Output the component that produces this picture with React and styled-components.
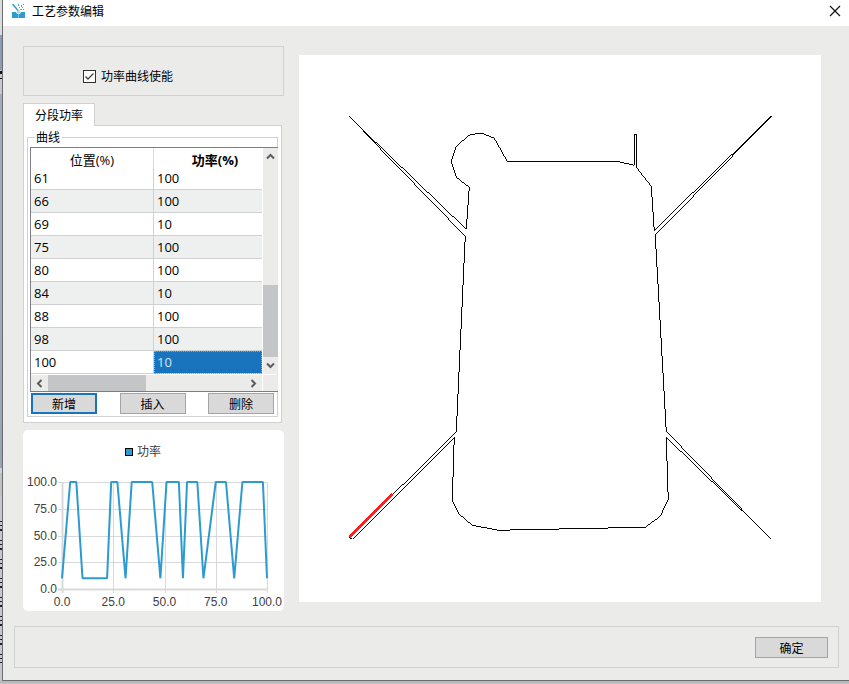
import React, { useState } from "react";
import styled, { createGlobalStyle } from "styled-components";

const Color = {
    Face: "#ebebe9",
    Line: "#d0d1d3",
    Frame: "#7b7d8a",
    Thumb: "#c4c5c7",
    Button: "#d9d9d9",
    ButtonLine: "#a3a4a8",
    Primary: "#1a74bd",
    Series: "#2d9bd0",
};

const POINTS = [
    [0, 10], [4, 100], [7, 100], [10, 10], [22, 10], [24, 100], [27, 100], [31, 10],
    [34, 100], [44, 100], [48, 10], [51, 100], [57, 100], [59, 10], [61, 100], [66, 100],
    [69, 10], [75, 100], [80, 100], [84, 10], [88, 100], [98, 100], [100, 10],
];
const VISIBLE_ROWS = 9;

const GlobalStyle = createGlobalStyle`
    * {
        box-sizing: border-box;
    }
    body {
        margin: 0;
        font-family: "Noto Sans CJK SC", sans-serif;
        font-size: 12px;
        line-height: 14px;
        color: #000;
    }
    button, input {
        font: inherit;
        color: inherit;
        margin: 0;
        padding: 0;
    }
`;

/* the sliver of the application behind the dialog */
const Desktop = styled.div`
    min-height: 100vh;
    padding: 0 0 3px 2px;
    background:
        repeating-linear-gradient(#222 0 1px, #c6c7c9 1px 4px, #222 4px 5px, #c6c7c9 5px 8px, #222 8px 10px, #c6c7c9 10px 19px) 0 521px / 2px 142px no-repeat,
        linear-gradient(#dcdcdc 0 35px, #8b9db5 35px 70px, #c8c8c8 70px 71px, #111 71px 74px, #c8c8c8 74px 78px, #111 78px 79px, #c8c8c8 79px 94px, #a2abbb 94px 300px, #97a3b5 468px, #d2d2d2 468px 473px, #c0c0c0 473px 496px, #c6c7c9 496px) 0 0 / 2px 681px no-repeat,
        linear-gradient(#b4b5b7, #bfc1c3) 0 100% / 100% 3px no-repeat,
        #c6c7c9;
`;

const Window = styled.div`
    border-left: 1px solid #6b6d73;
    border-bottom: 1px solid #6b6d73;
    background-color: ${Color.Face};
    padding-bottom: 12px;
`;

const TitleBar = styled.header`
    height: 26px;
    padding: 0 8px 4px;
    display: flex;
    align-items: center;
    background-color: #fff;
`;

const Title = styled.h1`
    margin: 0 0 0 7px;
    flex: 1;
    font-size: 12px;
    font-weight: 400;
`;

const CloseButton = styled.button`
    width: 12px;
    height: 12px;
    border: none;
    background: none;
    display: flex;
`;

const Content = styled.main`
    display: flex;
    align-items: flex-start;
    gap: 15px;
    padding: 20px 28px 15px 20px;
`;

const SidePanel = styled.div`
    width: 261px;
    flex: none;
    display: flex;
    flex-direction: column;
    gap: 7px;
`;

const EnableBox = styled.div`
    border: 1px solid ${Color.Line};
    padding: 22px 0 12px 59px;
`;

const CheckLabel = styled.label`
    display: flex;
    align-items: center;
    gap: 5px;
`;

const CheckWrap = styled.span`
    position: relative;
    width: 13px;
    height: 13px;
    svg {
        position: absolute;
        inset: 0;
        pointer-events: none;
    }
`;

const CheckInput = styled.input`
    appearance: none;
    display: block;
    width: 13px;
    height: 13px;
    border: 1px solid #333;
    background-color: #fff;
`;

const Tabs = styled.div`
    width: 259px;
`;

const Tab = styled.button`
    position: relative;
    display: block;
    width: 72px;
    height: 23px;
    margin-bottom: -1px;
    border: 1px solid ${Color.Line};
    border-bottom: none;
    background-color: #fff;
`;

const TabPanel = styled.div`
    border: 1px solid ${Color.Line};
    background-color: #fff;
    padding: 4px 3px 5px;
`;

const Group = styled.fieldset`
    min-width: 0;
    margin: 0;
    border: 1px solid ${Color.Line};
    padding: 3px 0 2px 2px;
`;

const Legend = styled.legend`
    margin-left: 5px;
    padding: 0 2px 0 1px;
`;

const TableFrame = styled.div`
    display: grid;
    grid-template-columns: 1fr 15px;
    grid-template-rows: auto 16px;
    gap: 1px;
    margin-right: -1px;
    border: 1px solid ${Color.Frame};
    border-right: none;
`;

const Table = styled.table`
    width: 100%;
    table-layout: fixed;
    border-collapse: separate;
    border-spacing: 0;
    font-family: "Open Sans", "Noto Sans CJK SC", sans-serif;
    font-size: 13px;
`;

const HeadCell = styled.th`
    height: 19px;
    padding: 5px 0 0;
    line-height: 14px;
    font-weight: ${(props) => (props.$current ? 700 : 400)};
    width: ${(props) => props.$width || "auto"};
    border-right: ${(props) => (props.$current ? "none" : "1px solid #dcdcdc")};
    padding-left: ${(props) => (props.$current ? "14px" : "0")};
`;

const Row = styled.tr`
    background-color: ${(props) => (props.$alt ? "#eef0ef" : "#fff")};
`;

const Cell = styled.td`
    height: 23px;
    padding: 0 3px;
    line-height: 18px;
    border-bottom: 1px solid ${Color.Line};
    border-right: ${(props) => (props.$last ? "none" : `1px solid ${Color.Line}`)};
    ${(props) =>
        props.$selected &&
        `
        background-color: ${Color.Primary};
        color: #cfe6f8;
        outline: 1px dotted #f08c3c;
        outline-offset: -1px;
    `}
`;

const ScrollBar = styled.div`
    display: flex;
    flex-direction: ${(props) => (props.$vertical ? "column" : "row")};
    background-color: ${Color.Face};
`;

const ScrollTrack = styled.div`
    flex: 1;
    display: flex;
    flex-direction: inherit;
    justify-content: ${(props) => (props.$end ? "flex-end" : "flex-start")};
`;

const ScrollThumb = styled.div`
    flex: 0 0 ${(props) => props.$length}px;
    background-color: ${Color.Thumb};
`;

const ArrowButton = styled.button`
    flex: 0 0 17px;
    display: flex;
    align-items: center;
    justify-content: center;
    border: none;
    background: none;
    svg {
        transform: rotate(${(props) => props.$turn}deg);
    }
`;

const Corner = styled.div`
    background-color: ${Color.Face};
`;

const ButtonRow = styled.div`
    display: flex;
    justify-content: space-between;
    padding: 1px 3px 0 1px;
`;

const Button = styled.button`
    width: ${(props) => (props.$wide ? 73 : 66)}px;
    height: 21px;
    border: ${(props) => (props.$focused ? `2px solid ${Color.Primary}` : `1px solid ${Color.ButtonLine}`)};
    background-color: ${Color.Button};
`;

const ChartCard = styled.div`
    height: 181px;
    border-radius: 5px;
    background-color: #fff;
    svg {
        display: block;
    }
    text {
        font-family: "Liberation Sans", "Noto Sans CJK SC", sans-serif;
        font-size: 12px;
        fill: #404044;
    }
`;

const Preview = styled.div`
    flex: 1;
    min-width: 0;
    margin-top: 9px;
    background-color: #fff;
    svg {
        display: block;
        width: 100%;
    }
`;

const Footer = styled.footer`
    display: flex;
    justify-content: flex-end;
    margin: 0 10px 0 11px;
    padding: 10px;
    border: 1px solid ${Color.Line};
    height: 42px;
`;

const AppIcon = () => (
    <svg width="14" height="16" viewBox="0 0 14 16">
        <path d="M1 9h4l1 2h3l1-2h4v6H1z" fill="#2d9bd0" />
        <path d="M6 8l1.5-1L9 8v2l-1.5 1L6 10z" fill="#a9d5e8" />
        <path d="M7 11h1v4H7z" fill="#7cc3e2" />
        <path d="M1.5 1L7 7.5" stroke="#2d9bd0" strokeWidth="1.4" fill="none" />
        <path d="M7 1h1v2H7zM8 4h1v1H8zM10 2h1v2h-1zM12 1h1v1h-1zM11 4h1v1h-1zM9 6h2v1H9zM12 6h1v1h-1z" fill="#4aa9cf" />
    </svg>
);

const Chevron = () => (
    <svg width="9" height="7" viewBox="0 0 9 7">
        <path d="M1 5.5L4.5 2L8 5.5" fill="none" stroke="#5c5c5e" strokeWidth="2" />
    </svg>
);

const PowerChart = ({ points }) => {
    const left = 39;
    const top = 52;
    const width = 205;
    const height = 107;
    const toX = (v) => left + (v * width) / 100;
    const toY = (v) => top + height - (v * height) / 100;
    const ticks = [0, 25, 50, 75, 100];

    return (
        <svg width="261" height="181" viewBox="0 0 261 181">
            <rect x="102.5" y="18.5" width="7" height="7" fill={Color.Series} stroke="#000" />
            <text x="114" y="26">功率</text>
            {ticks.map((t) => (
                <g key={t} stroke="#d9d9db">
                    <path d={`M${left - 4} ${Math.round(toY(t)) + 0.5}H${left + width}`} strokeWidth={t === 0 ? 2 : 1} />
                    <path d={`M${Math.round(toX(t)) + 0.5} ${top}V${top + height + 4}`} strokeWidth={t === 0 ? 2 : 1} />
                </g>
            ))}
            {ticks.map((t) => (
                <g key={t}>
                    <text x={left - 5} y={Math.round(toY(t)) + 4} textAnchor="end">{t.toFixed(1)}</text>
                    <text x={toX(t)} y="176" textAnchor="middle">{t.toFixed(1)}</text>
                </g>
            ))}
            <polyline
                points={points.map(([x, y]) => `${toX(x)},${toY(y)}`).join(" ")}
                fill="none"
                stroke={Color.Series}
                strokeWidth="2"
                strokeLinejoin="bevel"
            />
        </svg>
    );
};

const Contour = () => (
    <svg viewBox="-0.25 -0.25 522 547" fill="none" shapeRendering="crispEdges">
        {/* just under 1 so the diagonals stay one pixel thick */}
        <path
            stroke="#000"
            strokeWidth="0.98"
            d="M50 61L64 75L167 174L170 132L157 122L152 106L157 91L170 80L179 78L183 78L195 83L208 106L317 106L335 110
               V79H337V112L352 131L355 175L472 61L356 180L367 376L458 470L472 484L458 470L367 382L369 444L361 461L346 472
               L199 475L173 470L160 459L153 445L155 382L53 484L50 482L157 377L166 181L64 76"
        />
        <path stroke="#ff2020" strokeWidth="2.6" d="M50 482L93 439" />
    </svg>
);

export default function App() {
    const [enabled, setEnabled] = useState(true);
    const rows = POINTS.slice(-VISIBLE_ROWS);

    return (
        <Desktop>
            <GlobalStyle />
            <Window>
                <TitleBar>
                    <AppIcon />
                    <Title>工艺参数编辑</Title>
                    <CloseButton aria-label="关闭">
                        <svg width="12" height="12" viewBox="0 0 12 12">
                            <path d="M1 1L11 11M11 1L1 11" stroke="#111" strokeWidth="1.2" />
                        </svg>
                    </CloseButton>
                </TitleBar>
                <Content>
                    <SidePanel>
                        <EnableBox>
                            <CheckLabel>
                                <CheckWrap>
                                    <CheckInput type="checkbox" checked={enabled} onChange={(e) => setEnabled(e.target.checked)} />
                                    {enabled && (
                                        <svg width="13" height="13" viewBox="0 0 13 13">
                                            <path d="M2.5 6.5L5 9L10.5 3.5" fill="none" stroke="#444" strokeWidth="1.4" />
                                        </svg>
                                    )}
                                </CheckWrap>
                                功率曲线使能
                            </CheckLabel>
                        </EnableBox>
                        <Tabs>
                            <Tab role="tab" aria-selected="true">分段功率</Tab>
                            <TabPanel role="tabpanel">
                                <Group>
                                    <Legend>曲线</Legend>
                                    <TableFrame>
                                        <Table>
                                            <thead>
                                                <tr>
                                                    <HeadCell $width="123px">位置(%)</HeadCell>
                                                    <HeadCell $current>功率(%)</HeadCell>
                                                </tr>
                                            </thead>
                                            <tbody>
                                                {rows.map(([position, power], i) => (
                                                    <Row key={position} $alt={i % 2 === 1}>
                                                        <Cell>{position}</Cell>
                                                        <Cell $last $selected={i === rows.length - 1}>{power}</Cell>
                                                    </Row>
                                                ))}
                                            </tbody>
                                        </Table>
                                        <ScrollBar $vertical>
                                            <ArrowButton $turn={0} aria-label="向上"><Chevron /></ArrowButton>
                                            <ScrollTrack $end><ScrollThumb $length={72} /></ScrollTrack>
                                            <ArrowButton $turn={180} aria-label="向下"><Chevron /></ArrowButton>
                                        </ScrollBar>
                                        <ScrollBar>
                                            <ArrowButton $turn={-90} aria-label="向左"><Chevron /></ArrowButton>
                                            <ScrollTrack><ScrollThumb $length={98} /></ScrollTrack>
                                            <ArrowButton $turn={90} aria-label="向右"><Chevron /></ArrowButton>
                                        </ScrollBar>
                                        <Corner />
                                    </TableFrame>
                                    <ButtonRow>
                                        <Button $focused>新增</Button>
                                        <Button>插入</Button>
                                        <Button>删除</Button>
                                    </ButtonRow>
                                </Group>
                            </TabPanel>
                        </Tabs>
                        <ChartCard>
                            <PowerChart points={POINTS} />
                        </ChartCard>
                    </SidePanel>
                    <Preview>
                        <Contour />
                    </Preview>
                </Content>
                <Footer>
                    <Button $wide>确定</Button>
                </Footer>
            </Window>
        </Desktop>
    );
}
